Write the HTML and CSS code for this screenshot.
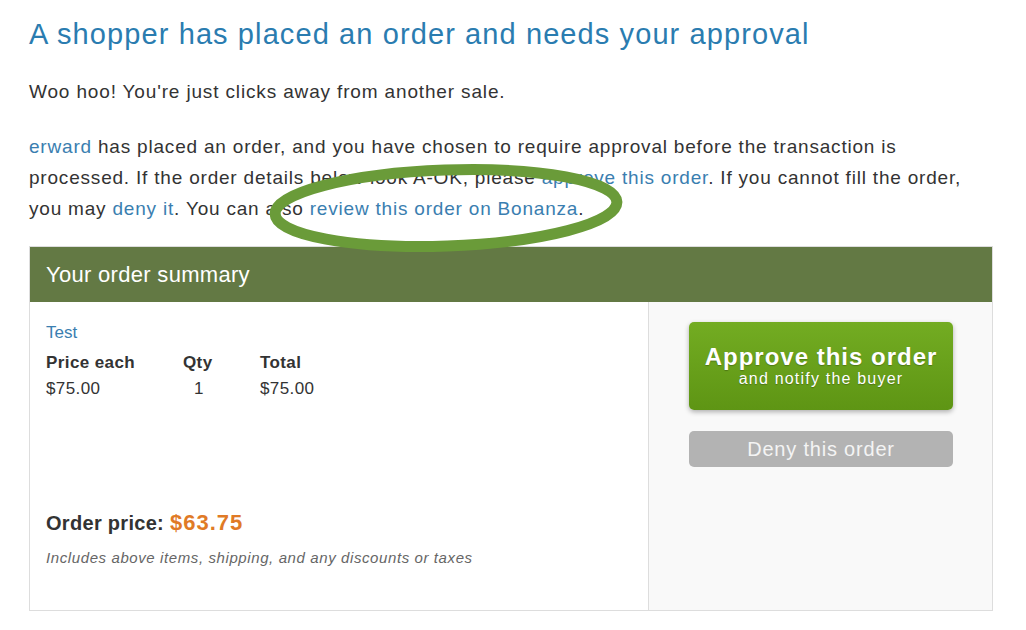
FILE: index.html
```html
<!DOCTYPE html>
<html lang="en">
<head>
    <link rel="stylesheet" href="styles.css">
    <meta charset="UTF-8">
    <title>Order approval</title>
</head>
<body>
    <div class="page">
        <h1 class="title">A shopper has placed an order and needs your approval</h1>
        <p class="intro">Woo hoo! You're just clicks away from another sale.</p>
        <p class="details">
            <a href="#">erward</a> has placed an order, and you have chosen to require approval before the transaction is<br>
            processed. If the order details below look A-OK, please <a href="#">approve this order</a>. If you cannot fill the order,<br>
            you may <a href="#">deny it</a>. You can also <a href="#">review this order on Bonanza</a>.
        </p>

        <div class="summary">
            <div class="summary-head">Your order summary</div>
            <div class="summary-body">
                <div class="items">
                    <a class="item-name" href="#">Test</a>
                    <table class="item-table">
                        <tr>
                            <th class="col-price">Price each</th>
                            <th class="col-qty">Qty</th>
                            <th>Total</th>
                        </tr>
                        <tr>
                            <td>$75.00</td>
                            <td class="qty">1</td>
                            <td>$75.00</td>
                        </tr>
                    </table>
                    <div class="order-price">Order price: <span class="amount">$63.75</span></div>
                    <div class="note">Includes above items, shipping, and any discounts or taxes</div>
                </div>
                <div class="actions">
                    <a class="approve" href="#">
                        <span class="approve-main">Approve this order</span>
                        <span class="approve-sub">and notify the buyer</span>
                    </a>
                    <a class="deny" href="#">Deny this order</a>
                </div>
            </div>
        </div>

        <!-- marker drawn over the screenshot -->
        <svg class="circle" width="380" height="110" viewBox="0 0 380 110">
            <ellipse cx="190" cy="55" rx="171" ry="38" fill="none" stroke="#6a9b39" stroke-width="11" transform="rotate(-2 190 55)"/>
        </svg>
    </div>
</body>
</html>
```

FILE: styles.css
```css
body {
    margin: 0;
    background: #fff;
    font-family: "Liberation Sans", Arial, sans-serif;
    color: #333;
}

a {
    color: #3a7eb0;
    text-decoration: none;
}

.page {
    position: relative;
    padding: 14px 33px 0 29px;
}

.title {
    margin: 0;
    font-size: 29px;
    font-weight: normal;
    color: #2a7cb0;
    line-height: 40px;
    letter-spacing: 1.1px;
}

.intro {
    margin: 25px 0 0;
    font-size: 19px;
    line-height: 26px;
    letter-spacing: 0.85px;
}

.details {
    margin: 26px 0 0;
    font-size: 19px;
    line-height: 31px;
    letter-spacing: 0.8px;
    white-space: nowrap;
}

.summary {
    margin-top: 22px;
    border: 1px solid #ddd;
}

.summary-head {
    background: #637944;
    color: #fff;
    font-size: 22px;
    letter-spacing: 0.3px;
    height: 55px;
    line-height: 55px;
    padding-left: 16px;
}

.summary-body {
    display: flex;
    height: 308px;
}

.items {
    flex: 1;
    padding: 20px 16px 0;
    display: flex;
    flex-direction: column;
    align-items: flex-start;
}

.item-name {
    font-size: 17px;
    line-height: 22px;
}

.item-table {
    border-collapse: collapse;
    font-size: 17px;
    letter-spacing: 0.4px;
    margin-top: 7px;
}

.item-table th {
    text-align: left;
    padding: 0;
    line-height: 24px;
}

.item-table td {
    padding: 0;
    line-height: 28px;
}

.col-price {
    width: 137px;
}

.col-qty {
    width: 77px;
}

.qty {
    padding-left: 11px !important;
}

.order-price {
    margin-top: auto;
    font-size: 20px;
    letter-spacing: 0.3px;
    font-weight: bold;
    color: #333;
}

.amount {
    color: #e07a26;
    font-size: 22px;
    letter-spacing: 1px;
}

.note {
    margin: 13px 0 44px;
    font-size: 15px;
    letter-spacing: 0.6px;
    font-style: italic;
    color: #666;
}

.actions {
    width: 344px;
    background: #f9f9f9;
    border-left: 1px solid #ddd;
    padding: 20px 39px 0 40px;
    box-sizing: border-box;
    display: flex;
    flex-direction: column;
}

.approve {
    height: 88px;
    border-radius: 5px;
    background: linear-gradient(#73ac22, #5e9514);
    box-shadow: 0 2px 5px rgba(0, 0, 0, 0.3);
    color: #fff;
    display: flex;
    flex-direction: column;
    align-items: center;
    justify-content: center;
    text-shadow: 0 1px 1px rgba(0, 0, 0, 0.25);
}

.approve-main {
    font-size: 24px;
    letter-spacing: 1px;
    font-weight: bold;
    line-height: 26px;
}

.approve-sub {
    font-size: 16px;
    letter-spacing: 1.2px;
    line-height: 18px;
}

.deny {
    margin-top: 21px;
    height: 36px;
    line-height: 36px;
    border-radius: 5px;
    background: #b3b3b3;
    color: #f4f4f4;
    text-align: center;
    font-size: 20px;
    letter-spacing: 0.8px;
}

.circle {
    position: absolute;
    left: 256px;
    top: 153px;
}
```
